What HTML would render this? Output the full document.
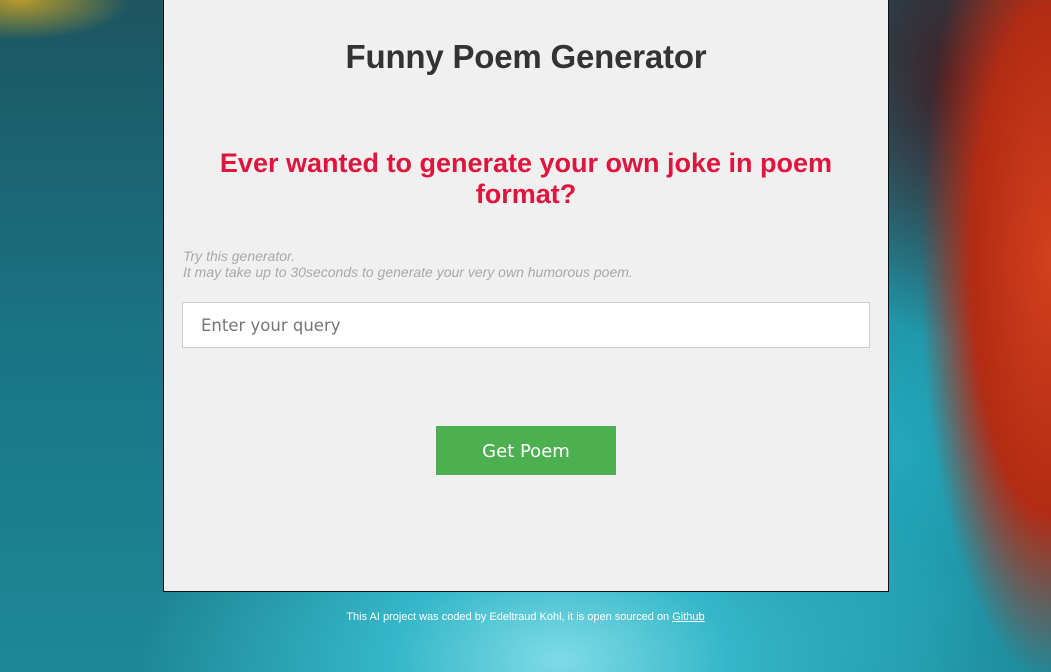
<!DOCTYPE html>
<html><head><meta charset="utf-8"><style>
html,body{margin:0;width:1051px;height:672px;overflow:hidden;font-family:"Liberation Sans",sans-serif}
body{position:relative;background:
radial-gradient(ellipse 110px 40px at 20px 0px,#b89a2a 0%,rgba(184,154,42,0) 100%),
radial-gradient(ellipse 130px 420px at 1050px 260px,#d2401c 0%,#b32b14 60%,rgba(120,30,20,0) 100%),
radial-gradient(ellipse 160px 260px at 950px 80px,#3e2228 0%,rgba(60,30,40,0) 100%),
radial-gradient(ellipse 420px 260px at 560px 660px,#7fdbe6 0%,#35b7c9 40%,rgba(30,150,170,0) 100%),
radial-gradient(ellipse 200px 400px at 900px 450px,#23a8bc 0%,rgba(20,120,140,0) 100%),
linear-gradient(180deg,#1d5560 0%,#1a7484 50%,#1d8898 100%);}
.card{position:absolute;left:163px;top:0;width:724px;height:591px;background:#f0f0f0;border:1px solid #111;border-top:none;}
h1{margin:0;position:absolute;top:38px;left:0;right:0;text-align:center;font-size:33px;color:#333;font-weight:bold;letter-spacing:-0.2px}
h2{margin:0;position:absolute;top:148px;left:40px;right:40px;text-align:center;font-size:27px;line-height:31px;color:#e0143c;font-weight:bold}
.p{position:absolute;top:248px;left:19px;font-size:14px;font-style:italic;color:#a8a8a8;line-height:16px}
.in{position:absolute;top:302px;left:18px;background:#fff;border:1px solid #ccc;font-family:"DejaVu Sans",sans-serif;font-size:16.5px;color:#757575;line-height:46px;padding-left:18px;box-sizing:border-box;width:688px;height:46px}
.btn{position:absolute;top:426px;left:272px;width:180px;height:49px;background:#4caf50;color:#fff;font-family:"DejaVu Sans",sans-serif;font-size:18px;text-align:center;line-height:51px}
.f{position:absolute;top:611px;left:0;width:1051px;text-align:center;color:#fff;font-size:11px}
.f u{color:#fff}
</style></head><body>
<div class="card">
<h1>Funny Poem Generator</h1>
<h2>Ever wanted to generate your own joke in poem format?</h2>
<div class="p">Try this generator.<br>It may take up to 30seconds to generate your very own humorous poem.</div>
<div class="in">Enter your query</div>
<div class="btn">Get Poem</div>
</div>
<div class="f">This AI project was coded by Edeltraud Kohl, it is open sourced on <u>Github</u></div>
</body></html>
